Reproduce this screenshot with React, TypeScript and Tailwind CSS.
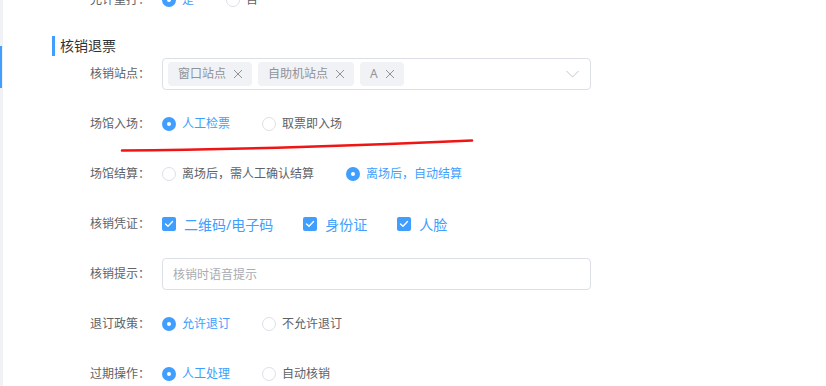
import type { ReactNode } from 'react';

function Radio({ label, checked }: { label: string; checked?: boolean }) {
  return (
    <label className="flex items-center mr-[32px]">
      {checked ? (
        <span className="w-[14px] h-[14px] rounded-full bg-[#409eff] flex items-center justify-center">
          <span className="w-[4px] h-[4px] rounded-full bg-white" />
        </span>
      ) : (
        <span className="w-[14px] h-[14px] rounded-full border border-[#dcdfe6] bg-white" />
      )}
      <span className={`ml-[6px] text-[12px] ${checked ? 'text-[#409eff]' : 'text-[#606266]'}`}>{label}</span>
    </label>
  );
}

function Checkbox({ label }: { label: string }) {
  return (
    <label className="flex items-center mr-[30px]">
      <span className="w-[14px] h-[14px] rounded-[2px] bg-[#409eff] flex items-center justify-center">
        <svg width="14" height="14" viewBox="0 0 14 14" fill="none">
          <path d="M3.5 7 L6 9.2 L10.5 4.6" stroke="white" strokeWidth="1.4" strokeLinecap="round" strokeLinejoin="round" />
        </svg>
      </span>
      <span className="ml-[8px] text-[14px] text-[#409eff]">{label}</span>
    </label>
  );
}

function Tag({ text }: { text: string }) {
  return (
    <span className="flex items-center h-[24px] pl-[10px] pr-[8px] rounded-[4px] bg-[#f0f2f5] text-[12px] text-[#909399]">
      {text}
      <svg className="ml-[6px]" width="12" height="12" viewBox="0 0 12 12" fill="none">
        <path d="M2 2 L10 10 M10 2 L2 10" stroke="#909399" strokeWidth="1" />
      </svg>
    </span>
  );
}

function Row({ label, children, className = '' }: { label: string; children: ReactNode; className?: string }) {
  return (
    <div className={`flex items-center min-h-[32px] mb-[18px] ${className}`}>
      <div className="w-[111px] shrink-0 pr-[12px] text-right text-[12px] text-[#606266]">{label}</div>
      <div className="flex items-center">{children}</div>
    </div>
  );
}

export default function App() {
  return (
    <div className="relative flex h-[386px] w-[826px] overflow-hidden bg-white font-['Noto_Sans','Noto_Sans_CJK_SC',sans-serif]">
      <div className="w-[3px] shrink-0 bg-[#f0f2f5] pt-[46px]">
        <div className="w-[2px] h-[42px] bg-[#409eff]" />
      </div>

      <div className="pl-[48px]">
        <Row label="允许重打：" className="-mt-[16px] !mb-[20px]">
          <Radio label="是" checked />
          <Radio label="否" />
        </Row>

        <div className="ml-[1px] mb-[1px] h-[20px] border-l-[3px] border-[#409eff] pl-[5px] text-[14px] leading-[20px] text-[#303133]">
          核销退票
        </div>

        <Row label="核销站点：" className="!min-h-[33px]">
          <div className="flex items-center w-[429px] h-[32px] border border-[#dcdfe6] rounded-[4px] pl-[5px] pr-[11px]">
            <div className="flex items-center gap-[6px] flex-1">
              <Tag text="窗口站点" />
              <Tag text="自助机站点" />
              <Tag text="A" />
            </div>
            <svg width="13" height="8" viewBox="0 0 13 8" fill="none">
              <path d="M0.5 1 L6.5 7 L12.5 1" stroke="#c0c4cc" strokeWidth="1" />
            </svg>
          </div>
        </Row>

        <Row label="场馆入场：">
          <Radio label="人工检票" checked />
          <Radio label="取票即入场" />
        </Row>

        <Row label="场馆结算：">
          <Radio label="离场后，需人工确认结算" />
          <Radio label="离场后，自动结算" checked />
        </Row>

        <Row label="核销凭证：">
          <Checkbox label="二维码/电子码" />
          <Checkbox label="身份证" />
          <Checkbox label="人脸" />
        </Row>

        <Row label="核销提示：">
          <input
            className="w-[429px] h-[32px] border border-[#dcdfe6] rounded-[4px] px-[10px] text-[12px] text-[#606266] placeholder:text-[#a8abb2] outline-none"
            placeholder="核销时语音提示"
          />
        </Row>

        <Row label="退订政策：">
          <Radio label="允许退订" checked />
          <Radio label="不允许退订" />
        </Row>

        <Row label="过期操作：">
          <Radio label="人工处理" checked />
          <Radio label="自动核销" />
        </Row>
      </div>

      <svg className="absolute inset-0 pointer-events-none" width="826" height="386" viewBox="0 0 826 386" fill="none">
        <path d="M122 150.5 C 200 150, 250 148.5, 300 147 C 370 145, 420 143, 472 140.5" stroke="#f01414" strokeWidth="2.6" strokeLinecap="round" />
      </svg>
    </div>
  );
}
